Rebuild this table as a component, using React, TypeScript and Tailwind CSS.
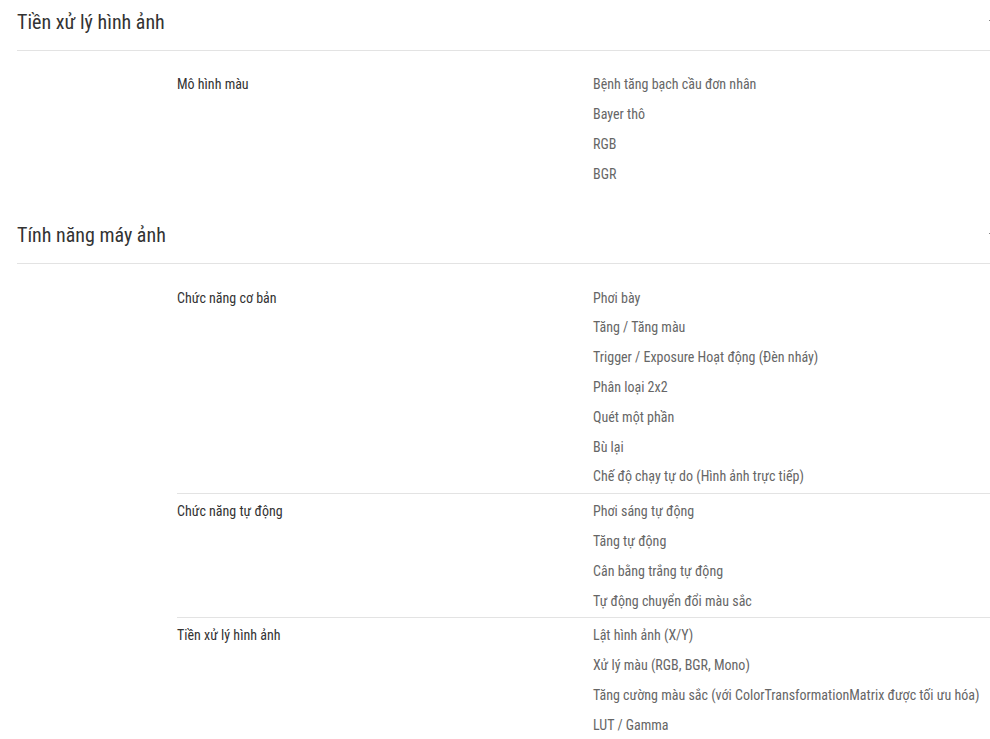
import React from 'react';

interface SpecRow {
    label: string;
    values: string[];
}

interface SpecSection {
    title: string;
    rows: SpecRow[];
}

const sections: SpecSection[] = [
    {
        title: 'Tiền xử lý hình ảnh',
        rows: [
            {
                label: 'Mô hình màu',
                values: ['Bệnh tăng bạch cầu đơn nhân', 'Bayer thô', 'RGB', 'BGR'],
            },
        ],
    },
    {
        title: 'Tính năng máy ảnh',
        rows: [
            {
                label: 'Chức năng cơ bản',
                values: [
                    'Phơi bày',
                    'Tăng / Tăng màu',
                    'Trigger / Exposure Hoạt động (Đèn nháy)',
                    'Phân loại 2x2',
                    'Quét một phần',
                    'Bù lại',
                    'Chế độ chạy tự do (Hình ảnh trực tiếp)',
                ],
            },
            {
                label: 'Chức năng tự động',
                values: ['Phơi sáng tự động', 'Tăng tự động', 'Cân bằng trắng tự động', 'Tự động chuyển đổi màu sắc'],
            },
            {
                label: 'Tiền xử lý hình ảnh',
                values: [
                    'Lật hình ảnh (X/Y)',
                    'Xử lý màu (RGB, BGR, Mono)',
                    'Tăng cường màu sắc (với ColorTransformationMatrix được tối ưu hóa)',
                    'LUT / Gamma',
                ],
            },
        ],
    },
];

export default function App() {
    return (
        <div className="w-full overflow-hidden bg-white font-['Roboto',sans-serif] font-stretch-semi-condensed">
            <div className="w-[1000px] pl-[17px]">
                {sections.map((section, si) => (
                    <div key={section.title} className={si > 0 ? 'mt-[23px]' : ''}>
                        {/* Titre de section */}
                        <div className="flex items-center justify-between pt-[10px] pb-[16px] border-b border-[#e3e3e3]">
                            <h2 className="text-[20px] leading-[24px] text-[#333]">{section.title}</h2>
                            <span className="block w-[10px] h-[1px] bg-[#888] mr-[1px] -translate-y-[2px]"></span>
                        </div>

                        <div className="pt-[16px]">
                            {section.rows.map((row, ri) => (
                                <div
                                    key={row.label}
                                    className={`ml-[160px] flex pt-[3px] pb-[1px] ${ri > 0 ? 'border-t border-[#e3e3e3]' : ''}`}
                                >
                                    <div className="w-[416px] shrink-0 h-[29.8px] flex items-center text-[14px] text-[#333]">
                                        {row.label}
                                    </div>
                                    <ul>
                                        {row.values.map((v) => (
                                            <li key={v} className="h-[29.8px] flex items-center text-[14px] text-[#666]">
                                                {v}
                                            </li>
                                        ))}
                                    </ul>
                                </div>
                            ))}
                        </div>
                    </div>
                ))}
            </div>
        </div>
    );
}
